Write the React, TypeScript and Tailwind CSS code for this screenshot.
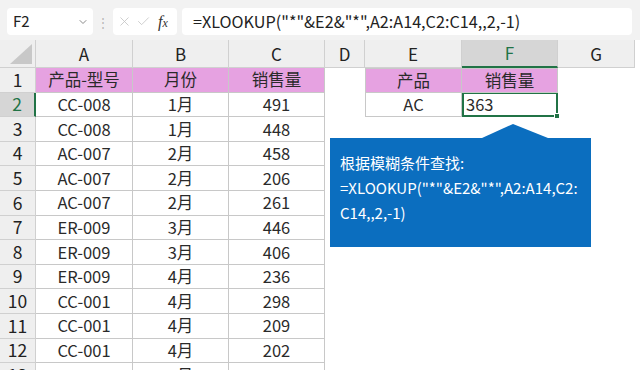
import { ChevronDown, X, Check } from "lucide-react";

const rows = [
  ["产品-型号", "月份", "销售量"],
  ["CC-008", "1月", "491"],
  ["CC-008", "1月", "448"],
  ["AC-007", "2月", "458"],
  ["AC-007", "2月", "206"],
  ["AC-007", "2月", "261"],
  ["ER-009", "3月", "446"],
  ["ER-009", "3月", "406"],
  ["ER-009", "4月", "236"],
  ["CC-001", "4月", "298"],
  ["CC-001", "4月", "209"],
  ["CC-001", "4月", "202"],
  ["CC-001", "5月", "315"],
];

const colHeads = [
  { label: "A", w: "w-[97px]" },
  { label: "B", w: "w-[96px]" },
  { label: "C", w: "w-[96px]" },
  { label: "D", w: "w-[40px]" },
  { label: "E", w: "w-[97px]" },
  { label: "F", w: "w-[96px]" },
  { label: "G", w: "w-[77px]" },
];

function FormulaBar() {
  return (
    <div className="flex h-[40px] items-start bg-[#f2f2f2] pt-[8px]">
      <div className="ml-[7px] flex h-[27px] w-[86px] items-center justify-between rounded-[4px] bg-white pl-[6px] pr-[4px]">
        <span className="text-[15px] text-[#222]">F2</span>
        <ChevronDown size={12} strokeWidth={2} className="text-[#8a8a8a]" />
      </div>
      <div className="flex h-[27px] w-[20px] items-center justify-center text-[12px] text-[#b5b5b5]">⋮</div>
      <div className="flex h-[27px] w-[64px] items-center gap-[4px] rounded-[4px] bg-white pl-[4px]">
        <X size={15} strokeWidth={1.3} className="text-[#c4c4c4]" />
        <Check size={15} strokeWidth={1.3} className="text-[#c4c4c4]" />
        <span className="ml-[3px] font-['Liberation_Serif',serif] text-[16px] italic text-[#333]">
          f<span className="text-[12px]">x</span>
        </span>
      </div>
      <div className="ml-[5px] mr-[8px] flex h-[27px] flex-1 items-center rounded-[4px] bg-white pl-[11px] text-[16.2px] text-[#222]">
        =XLOOKUP("*"&amp;E2&amp;"*",A2:A14,C2:C14,,2,-1)
      </div>
    </div>
  );
}

function HeaderRow() {
  return (
    <div className="flex h-[28px] bg-white">
      <div className="relative w-[36px] border-r border-b border-[#d0d0d0] bg-[#efefef]">
        <svg width="22" height="20" className="absolute right-[3px] bottom-[3px]">
          <polygon points="22,0 22,20 0,20" fill="#c8c8c8" />
        </svg>
      </div>
      {colHeads.map((c) => {
        const sel = c.label === "F";
        return (
          <div
            key={c.label}
            className={`${c.w} flex items-center justify-center border-r text-[17px] ${
              sel
                ? "border-b-2 border-r-[#d0d0d0] border-b-[#217346] bg-[#d6d6d6] text-[#217346]"
                : "border-b border-[#d0d0d0] bg-[#efefef] text-[#222]"
            }`}
          >
            {c.label}
          </div>
        );
      })}
    </div>
  );
}

function DataRow({ idx, cells }: { idx: number; cells: string[] }) {
  const head = idx === 1;
  const sel = idx === 2;
  return (
    <div className="flex h-[24.6px]">
      <div
        className={`flex w-[36px] items-center justify-center border-b border-[#d0d0d0] text-[17.5px] ${
          sel ? "border-r-2 border-r-[#217346] bg-[#d6d6d6] text-[#217346]" : "border-r bg-[#efefef] text-[#222]"
        }`}
      >
        {idx}
      </div>
      {cells.map((t, i) => (
        <div
          key={i}
          className={`${i === 0 ? "w-[97px]" : "w-[96px]"} flex items-center justify-center border-r border-b border-[#c8c8c8] text-[16.5px] ${
            head ? "bg-[#e6a2e1] text-[#2a2a2a]" : "bg-white text-[#2a2a2a]"
          }`}
        >
          {t}
        </div>
      ))}
      <div className="w-[40px]" />
      {idx === 1 && (
        <>
          <div className="flex w-[97px] items-center justify-center border-y border-l border-r border-[#c8c8c8] bg-[#e6a2e1] text-[16.5px] text-[#2a2a2a]">
            产品
          </div>
          <div className="flex w-[96px] items-center justify-center border-y border-r border-[#c8c8c8] bg-[#e6a2e1] text-[16.5px] text-[#2a2a2a]">
            销售量
          </div>
        </>
      )}
      {idx === 2 && (
        <>
          <div className="flex w-[97px] items-center justify-center border-x border-b border-[#c8c8c8] text-[16.5px] text-[#2a2a2a]">
            AC
          </div>
          <div className="relative flex w-[96px] items-center border-2 border-t-[1.5px] border-[#217346] pl-[2px] text-[16.5px] text-[#2a2a2a]">
            363
            <div className="absolute right-[-4px] bottom-[-4px] h-[6px] w-[6px] border border-white bg-[#217346]" />
          </div>
        </>
      )}
    </div>
  );
}

function Callout() {
  return (
    <div className="absolute left-[330px] top-[124px] w-[261px]">
      <svg width="261" height="14" className="block">
        <polygon points="152,14 183,0 218,14" fill="#0b6ebf" />
      </svg>
      <div className="h-[109px] bg-[#0b6ebf] pl-[10px] pt-[12px] text-[15px] leading-[25px] text-white">
        <div>根据模糊条件查找:</div>
        <div>=XLOOKUP("*"&amp;E2&amp;"*",A2:A14,C2:</div>
        <div>C14,,2,-1)</div>
      </div>
    </div>
  );
}

export default function App() {
  return (
    <div className="relative h-[370px] w-[640px] overflow-hidden bg-white font-['Noto_Sans_CJK_SC',sans-serif]">
      <FormulaBar />
      <HeaderRow />
      {rows.map((r, i) => (
        <DataRow key={i} idx={i + 1} cells={r} />
      ))}
      <Callout />
    </div>
  );
}
